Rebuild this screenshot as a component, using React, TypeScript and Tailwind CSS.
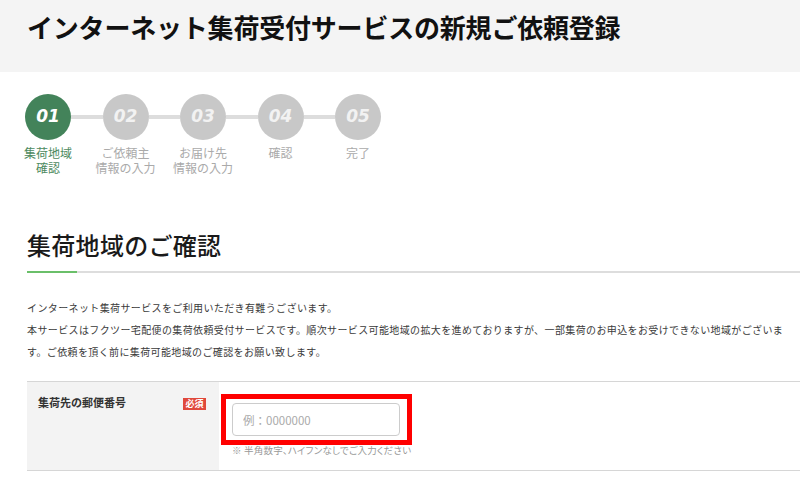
import React from "react";

const steps = [
  { n: "01", label: ["集荷地域", "確認"], active: true },
  { n: "02", label: ["ご依頼主", "情報の入力"], active: false },
  { n: "03", label: ["お届け先", "情報の入力"], active: false },
  { n: "04", label: ["確認"], active: false },
  { n: "05", label: ["完了"], active: false },
];

export default function App() {
  return (
    <div className="w-[800px] h-[484px] overflow-hidden bg-white font-['Noto_Sans_CJK_JP','Noto_Sans',sans-serif] text-[#222]">
      {/* Header */}
      <div className="h-[72px] bg-[#f4f4f4] pl-[27px] pt-[14px]">
        <h1 className="text-[26px] leading-[26px] font-bold text-[#111] tracking-[-0.2px]">
          インターネット集荷受付サービスの新規ご依頼登録
        </h1>
      </div>

      {/* Steps */}
      <div className="flex items-start pl-[25px] pt-[22px]">
        {steps.map((s, i) => (
          <React.Fragment key={s.n}>
            <div className="flex flex-col items-center w-[46px]">
              <div
                className={
                  s.active
                    ? "w-[46px] h-[46px] rounded-full bg-[#43835a] flex items-center justify-center"
                    : "w-[46px] h-[46px] rounded-full bg-[#c8c8c8] flex items-center justify-center"
                }
              >
                <span
                  className={
                    s.active
                      ? "font-['DejaVu_Sans',sans-serif] italic font-bold text-[17px] text-white"
                      : "font-['DejaVu_Sans',sans-serif] italic font-bold text-[17px] text-[#f2f2f2]"
                  }
                >
                  {s.n}
                </span>
              </div>
              <div
                className={
                  s.active
                    ? "mt-[5px] text-[12px] leading-[15px] text-[#4d8a60] text-center whitespace-nowrap"
                    : "mt-[5px] text-[12px] leading-[15px] text-[#aaaaaa] text-center whitespace-nowrap"
                }
              >
                {s.label.map((l) => (
                  <div key={l} className="h-[15px]">
                    {l}
                  </div>
                ))}
              </div>
            </div>
            {i < steps.length - 1 && (
              <div className="w-[31.5px] h-[4px] bg-[#dddddd] mt-[21px]" />
            )}
          </React.Fragment>
        ))}
      </div>

      {/* Section heading */}
      <div className="pl-[27px] mt-[54px]">
        <h2 className="text-[24px] leading-[32px] font-medium text-[#1a1a1a] tracking-[0.3px]">
          集荷地域のご確認
        </h2>
        <div className="mt-[10px] h-[2px] bg-[#dddddd] flex">
          <div className="w-[50px] h-[2px] bg-[#6abf69]" />
        </div>

        <div className="mt-[24px] text-[10px] leading-[22px] tracking-[0.38px] text-[#3a3a3a] whitespace-nowrap">
          <div>インターネット集荷サービスをご利用いただき有難うございます。</div>
          <div>
            本サービスはフクツー宅配便の集荷依頼受付サービスです。順次サービス可能地域の拡大を進めておりますが、一部集荷のお申込をお受けできない地域がございま
          </div>
          <div>す。ご依頼を頂く前に集荷可能地域のご確認をお願い致します。</div>
        </div>

        {/* Form row */}
        <div className="mt-[18px] flex border-y border-[#d6d6d6]">
          <div className="w-[192px] h-[88px] bg-[#f3f3f3] flex justify-between items-start">
            <div className="pl-[11px] pt-[12px] text-[11px] leading-[16px] font-bold text-[#333]">
              集荷先の郵便番号
            </div>
            <div className="mt-[16px] mr-[13px] w-[23px] h-[12px] bg-[#e0483b] text-white text-[9px] leading-[12px] font-bold text-center">
              必須
            </div>
          </div>
          <div className="flex-1 relative pl-[13px] pt-[21px]">
            <input
              type="text"
              placeholder="例：0000000"
              className="block w-[168px] h-[33px] border border-[#cccccc] rounded-[4px] px-[10px] text-[11.5px] text-[#333] placeholder:text-[#aaaaaa] outline-none bg-white"
            />
            <div className="mt-[8px] text-[9.5px] leading-[12px] text-[#999] [font-feature-settings:'palt'] tracking-[0.2px]">
              ※ 半角数字、ハイフンなしでご入力ください
            </div>
            <div className="absolute left-[2px] top-[12px] w-[191px] h-[51px] border-[5px] border-[#ff0000]" />
          </div>
        </div>
      </div>
    </div>
  );
}
